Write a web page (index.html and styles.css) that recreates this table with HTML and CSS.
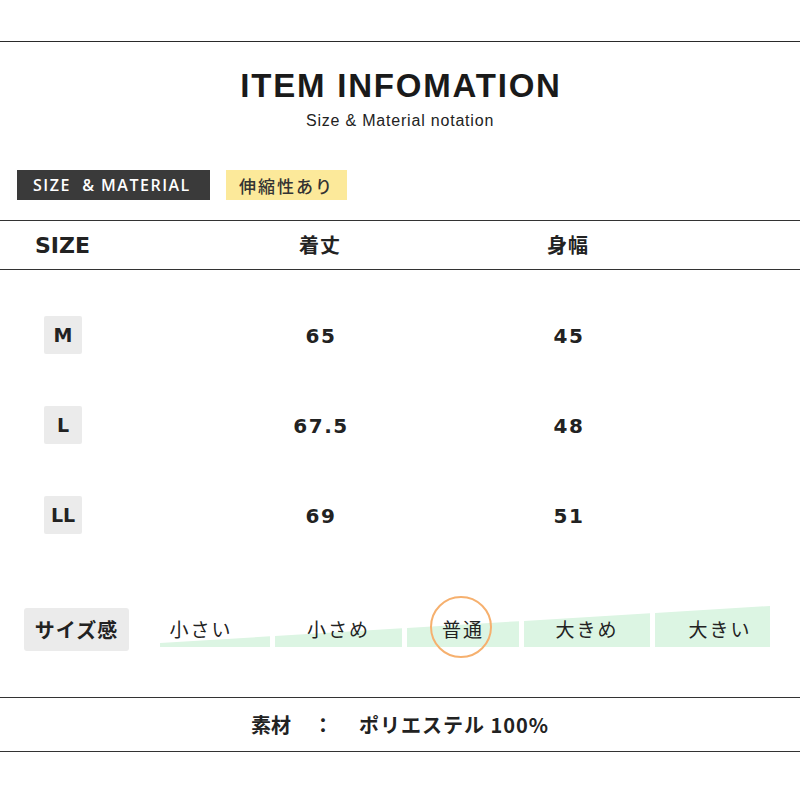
FILE: index.html
```html
<!DOCTYPE html>
<html lang="ja">
<head>
<meta charset="utf-8">
<title>Item Information</title>
<link rel="stylesheet" href="styles.css">
</head>
<body>
<div class="page">
  <hr class="top-rule">
  <header class="head">
    <h1 class="title">ITEM INFOMATION</h1>
    <p class="subtitle">Size &amp; Material notation</p>
  </header>

  <div class="tags">
    <span class="tag tag-dark">SIZE&nbsp; &amp; MATERIAL</span>
    <span class="tag tag-yellow">伸縮性あり</span>
  </div>

  <div class="table">
    <div class="thead">
      <div class="th th-size">SIZE</div>
      <div class="th">着丈</div>
      <div class="th">身幅</div>
      <div></div>
    </div>
    <div class="tbody">
      <div class="tr">
        <div class="td-size"><span class="badge">M</span></div>
        <div class="td">65</div>
        <div class="td">45</div>
        <div></div>
      </div>
      <div class="tr">
        <div class="td-size"><span class="badge">L</span></div>
        <div class="td">67.5</div>
        <div class="td">48</div>
        <div></div>
      </div>
      <div class="tr">
        <div class="td-size"><span class="badge">LL</span></div>
        <div class="td">69</div>
        <div class="td">51</div>
        <div></div>
      </div>
    </div>
  </div>

  <div class="fit">
    <div class="fit-badge">サイズ感</div>
    <div class="scale">
      <svg class="wedge" width="610" height="41" viewBox="0 0 610 41" aria-hidden="true">
        <polygon points="0,37 110,30.3 110,41 0,41" />
        <polygon points="115,30 242,22.3 242,41 115,41" />
        <polygon points="247,22 359,15.2 359,41 247,41" />
        <polygon points="364,14.9 490,7.3 490,41 364,41" />
        <polygon points="495,7 610,0 610,41 495,41" />
      </svg>
      <div class="scale-labels">
        <span class="lbl lbl-1">小さい</span>
        <span class="lbl">小さめ</span>
        <span class="lbl lbl-3">普通<span class="ring"></span></span>
        <span class="lbl">大きめ</span>
        <span class="lbl lbl-5">大きい</span>
      </div>
    </div>
  </div>

  <div class="material">
    <span>素材</span>
    <span class="colon">：</span>
    <span class="mat-value">ポリエステル 100%</span>
  </div>
</div>
</body>
</html>
```

FILE: styles.css
```css
* {
  box-sizing: border-box;
}

body {
  margin: 0;
  background: #ffffff;
  color: #222222;
  font-family: "Noto Sans CJK JP", "Noto Sans", sans-serif;
}

.page {
  width: 800px;
}

.top-rule {
  margin: 41px 0 0;
  border: 0;
  border-top: 1px solid #2a2a2a;
  height: 0;
}

.head {
  text-align: center;
  padding-top: 27px;
}

.title {
  margin: 0;
  font: bold 33px/33px "Liberation Sans", Arial, sans-serif;
  letter-spacing: 1.8px;
  padding-left: 2px;
  color: #1a1a1a;
}

.subtitle {
  margin: 11px 0 0;
  font: 16px/16px "Liberation Sans", Arial, sans-serif;
  letter-spacing: 0.8px;
  color: #222222;
}

.tags {
  display: flex;
  gap: 16px;
  padding-left: 17px;
  margin-top: 41px;
}

.tag {
  height: 30px;
  display: flex;
  align-items: center;
  white-space: nowrap;
}

.tag-dark {
  width: 193px;
  padding-left: 16px;
  background: #3a3a3a;
  color: #ffffff;
  font: 600 16px/1 "Open Sans", sans-serif;
  letter-spacing: 1.5px;
}

.tag-yellow {
  width: 121px;
  padding-left: 13px;
  background: #fce99a;
  color: #333333;
  font: 500 17px/1 "Noto Sans CJK JP", sans-serif;
  letter-spacing: 2px;
}

.table {
  margin-top: 20px;
}

.thead,
.tr {
  display: grid;
  grid-template-columns: 200px 240px 256px 1fr;
  align-items: center;
}

.thead {
  height: 50px;
  border-top: 1px solid #333333;
  border-bottom: 1px solid #333333;
}

.th {
  text-align: center;
  font: bold 20px/1 "Noto Sans CJK JP", sans-serif;
  letter-spacing: 1px;
}

.th.th-size {
  text-align: left;
  padding-left: 35px;
  padding-top: 2px;
  font: bold 22px/1 "DejaVu Sans", Verdana, sans-serif;
  letter-spacing: 0;
}

.tbody {
  padding-top: 20px;
}

.tr {
  height: 90px;
}

.td-size {
  padding-left: 44px;
}

.badge {
  display: flex;
  align-items: center;
  justify-content: center;
  width: 38px;
  height: 38px;
  background: #ebebeb;
  border-radius: 2px;
  font: bold 19px/1 "DejaVu Sans", Verdana, sans-serif;
}

.td {
  text-align: center;
  font: bold 20px/1 "DejaVu Sans", Verdana, sans-serif;
  letter-spacing: 1.5px;
  padding-left: 2px;
  padding-top: 2px;
}

.fit {
  display: flex;
  align-items: flex-start;
  padding-left: 24px;
  margin-top: 46px;
  height: 45px;
}

.fit-badge {
  width: 105px;
  height: 43px;
  margin-top: 2px;
  display: flex;
  align-items: center;
  justify-content: center;
  background: #ebebeb;
  border-radius: 3px;
  font: bold 20px/1 "Noto Sans CJK JP", sans-serif;
  letter-spacing: 1px;
}

.scale {
  position: relative;
  margin-left: 31px;
  width: 610px;
  height: 41px;
}

.wedge {
  position: absolute;
  left: 0;
  top: 0;
  fill: #dcf5e3;
}

.scale-labels {
  position: relative;
  display: grid;
  grid-template-columns: 110px 127px 112px 126px 115px;
  column-gap: 5px;
  padding-top: 11px;
}

.lbl {
  text-align: center;
  font: 400 19px/24px "Noto Sans CJK JP", sans-serif;
  letter-spacing: 2px;
  color: #222222;
  white-space: nowrap;
}

.lbl-1 {
  padding-right: 28px;
}

.lbl-5 {
  padding-left: 15px;
}

.lbl-3 {
  position: relative;
}

.ring {
  position: absolute;
  left: 50%;
  top: 50%;
  width: 62px;
  height: 62px;
  margin-left: -33px;
  margin-top: -33px;
  border: 2px solid #f6b06e;
  border-radius: 50%;
}

.material {
  margin-top: 46px;
  height: 55px;
  border-top: 1px solid #333333;
  border-bottom: 1px solid #333333;
  display: flex;
  align-items: center;
  justify-content: center;
  gap: 22px;
  font: bold 20px/1 "Noto Sans CJK JP", sans-serif;
  color: #222222;
}

.colon {
  margin-right: 4px;
}

.mat-value {
  letter-spacing: 1px;
}
```
